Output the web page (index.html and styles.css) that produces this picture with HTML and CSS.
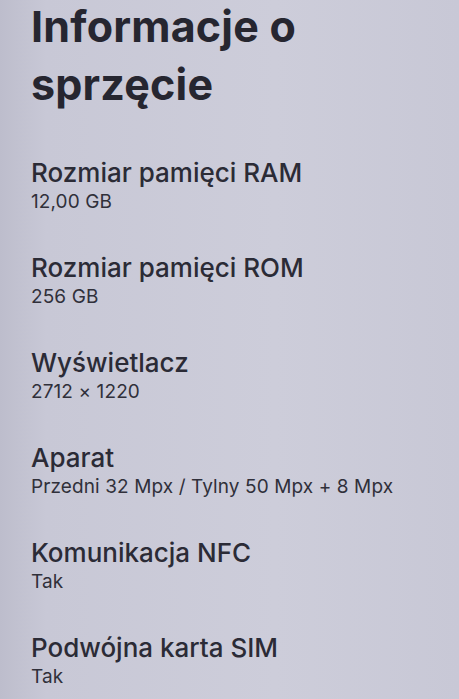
FILE: index.html
```html
<!DOCTYPE html>
<html lang="pl">
<head>
    <meta charset="UTF-8">
    <meta name="viewport" content="width=device-width, initial-scale=1.0">
    <title>Informacje o sprzęcie</title>
    <link rel="stylesheet" href="styles.css">
</head>
<body>
    <div class="screen">
        <h1 class="page-title">Informacje o sprzęcie</h1>
        <ul class="spec-list">
            <li class="spec-item">
                <span class="spec-label">Rozmiar pamięci RAM</span>
                <span class="spec-value">12,00 GB</span>
            </li>
            <li class="spec-item">
                <span class="spec-label">Rozmiar pamięci ROM</span>
                <span class="spec-value">256 GB</span>
            </li>
            <li class="spec-item">
                <span class="spec-label">Wyświetlacz</span>
                <span class="spec-value">2712 × 1220</span>
            </li>
            <li class="spec-item">
                <span class="spec-label">Aparat</span>
                <span class="spec-value">Przedni 32 Mpx / Tylny 50 Mpx + 8 Mpx</span>
            </li>
            <li class="spec-item">
                <span class="spec-label">Komunikacja NFC</span>
                <span class="spec-value">Tak</span>
            </li>
            <li class="spec-item">
                <span class="spec-label">Podwójna karta SIM</span>
                <span class="spec-value">Tak</span>
            </li>
        </ul>
    </div>
</body>
</html>
```

FILE: styles.css
```css
/* Global styles */
body {
    margin: 0;
    padding: 0;
    font-family: Inter, 'Noto Sans', sans-serif;
    color: #2b2b36;
    background: #c9c9d7;
}

/* Screen */
.screen {
    width: 459px;
    height: 699px;
    overflow: hidden;
    box-sizing: border-box;
    padding: 0 0 0 31px;
    background: linear-gradient(90deg, #bdbdcc 0%, #c8c8d6 10%, #cdcdda 60%, #c8c8d6 100%);
}

.page-title {
    margin: -3px 0 0;
    font-size: 43px;
    font-weight: 700;
    line-height: 58px;
    letter-spacing: 0.2px;
    color: #262630;
}

/* Spec list */
.spec-list {
    list-style: none;
    margin: 45px 0 0;
    padding: 0;
}

.spec-item {
    display: flex;
    flex-direction: column;
    height: 95px;
}

.spec-label {
    font-size: 26px;
    font-weight: 500;
    line-height: 30px;
}

.spec-value {
    font-size: 19px;
    line-height: 28px;
    letter-spacing: 0.1px;
    color: #30303a;
}
```
